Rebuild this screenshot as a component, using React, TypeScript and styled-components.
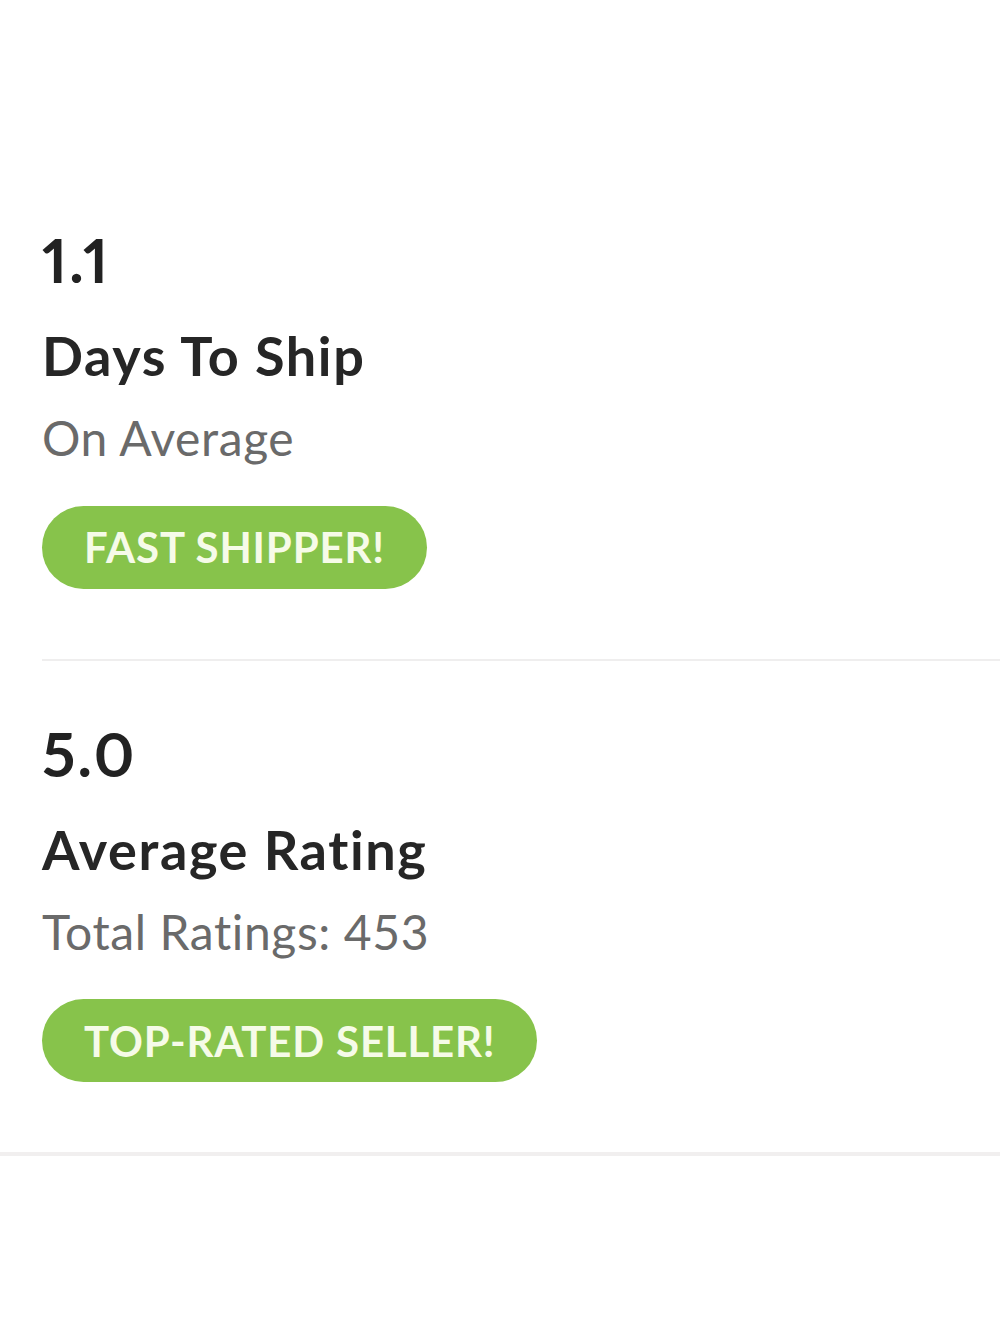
import React from "react";
import styled, { createGlobalStyle } from "styled-components";

const Global = createGlobalStyle`
  html, body { margin: 0; padding: 0; background: #ffffff; }
  body { font-family: "Lato", "Open Sans", sans-serif; -webkit-font-smoothing: antialiased; }
`;

const Page = styled.div`
  width: 1000px;
  min-height: 1333px;
  background: #fff;
  padding-top: 223px;
  box-sizing: border-box;
`;

const Section = styled.section<{ $full?: boolean }>`
  display: flex;
  flex-direction: column;
  align-items: flex-start;
  padding-bottom: 70px;
  margin-left: ${(p) => (p.$full ? "0" : "42px")};
  padding-left: ${(p) => (p.$full ? "42px" : "0")};
  border-bottom: ${(p) => (p.$full ? "4px solid #f1efef" : "2px solid #efeeee")};
  margin-bottom: 56px;
`;

const Value = styled.div`
  font-size: 61px;
  font-weight: 700;
  line-height: 1.2;
  color: #222;
  letter-spacing: 2px;
  font-variant-numeric: proportional-nums;
`;

const Title = styled.div`
  margin-top: 28px;
  font-size: 54px;
  font-weight: 700;
  line-height: 1.2;
  color: #262626;
  letter-spacing: 1.6px;
`;

const Sub = styled.div`
  margin-top: 20px;
  font-size: 48px;
  font-weight: 400;
  line-height: 1.2;
  color: #6a6a6a;
  letter-spacing: 0.6px;
`;

const Pill = styled.div`
  margin-top: 39px;
  height: 83px;
  padding: 0 42px;
  box-sizing: border-box;
  border-radius: 42px;
  background: #87c34b;
  color: #f6fbe8;
  font-size: 42px;
  font-weight: 700;
  letter-spacing: 0.8px;
  display: flex;
  align-items: center;
`;

const stats = [
  { value: "1.1", title: "Days To Ship", sub: "On Average", badge: "FAST SHIPPER!" },
  { value: "5.0", title: "Average Rating", sub: "Total Ratings: 453", badge: "TOP-RATED SELLER!" },
];

export default function App() {
  return (
    <Page>
      <Global />
      {stats.map((s, i) => (
        <Section key={s.value} $full={i === stats.length - 1}>
          <Value>{s.value}</Value>
          <Title>{s.title}</Title>
          <Sub>{s.sub}</Sub>
          <Pill>{s.badge}</Pill>
        </Section>
      ))}
    </Page>
  );
}
